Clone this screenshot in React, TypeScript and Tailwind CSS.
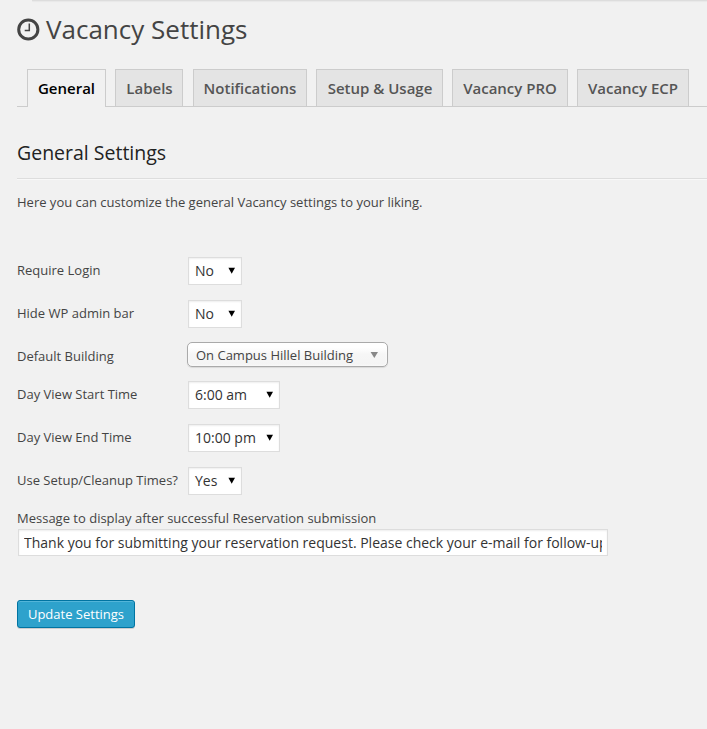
import React from "react";

const tabs = [
  { label: "Labels", cls: "ml-[9px] w-[68px] pl-px" },
  { label: "Notifications", cls: "ml-[10px] w-[114px]" },
  { label: "Setup & Usage", cls: "ml-[9px] w-[127px] pl-px" },
  { label: "Vacancy PRO", cls: "ml-[9px] w-[116px]" },
  { label: "Vacancy ECP", cls: "ml-[9px] w-[112px]" },
];

function Select({ value, width }: { value: string; width: string }) {
  return (
    <button
      className={`ml-px flex h-7 items-center justify-between border border-[#ddd] bg-white pr-[6px] pl-[6px] text-[14px] text-[#333] shadow-[inset_0_1px_2px_rgba(0,0,0,0.07)] ${width}`}
    >
      <span className="pb-[2px]">{value}</span>
      <svg className="mb-px" width="7" height="7" viewBox="0 0 7 7" fill="#000">
        <path d="M0.4 0.7h6.6L3.7 6.7z" />
      </svg>
    </button>
  );
}

function Row({ label, className, children }: { label: string; className: string; children: React.ReactNode }) {
  return (
    <div className={`flex items-center ${className}`}>
      <label className="w-[170px] pb-[2px] text-[13px] leading-5">{label}</label>
      {children}
    </div>
  );
}

export default function App() {
  return (
    <div className="h-[729px] w-[707px] overflow-hidden bg-[#f1f1f1] pl-[17px] font-['Open_Sans',sans-serif] whitespace-nowrap text-[#444]">
      <div className="ml-[15px] h-px bg-[#ddd] shadow-[0_1px_1px_rgba(0,0,0,0.04)]" />
      <h1 className="flex h-[58px] items-center text-[26px] leading-[36px] text-[#444]">
        <svg className="mr-[6px] mb-px" width="23" height="23" viewBox="0 0 23 23" fill="none" stroke="#444">
          <circle cx="11.3" cy="11.5" r="9.6" strokeWidth="3" />
          <path d="M12.3 5.5v7H7.7" strokeWidth="1.5" />
        </svg>
        <span className="pb-[2px]">Vacancy Settings</span>
      </h1>
      <nav className="mt-[10px] flex h-[38px] text-[15px] font-semibold text-[#555]">
        <div className="w-[10px] border-b border-[#ccc]" />
        <a className="flex w-[79px] items-center justify-center border border-b-0 border-[#ccc] bg-[#f1f1f1] text-black">
          General
        </a>
        <div className="flex flex-1 border-b border-[#ccc]">
          {tabs.map((t) => (
            <a
              key={t.label}
              className={`flex items-center justify-center border border-b-0 border-[#ccc] bg-[#e4e4e4] ${t.cls}`}
            >
              {t.label}
            </a>
          ))}
        </div>
      </nav>
      <h2 className="flex h-[72px] items-center border-b border-[#ddd] pt-[20px] text-[19.5px] text-[#222] shadow-[0_1px_0_#f8f8f8]">
        General Settings
      </h2>
      <p className="mt-[13px] text-[13px] leading-5">
        Here you can customize the general Vacancy settings to your liking.
      </p>
      <form className="mt-[45px]">
        <Row label="Require Login" className="h-7">
          <Select value="No" width="w-[54px]" />
        </Row>
        <Row label="Hide WP admin bar" className="mt-[15px] h-7">
          <Select value="No" width="w-[54px]" />
        </Row>
        <div className="mt-[14px] flex h-[26px] items-start">
          <label className="w-[170px] pt-[4px] text-[13px] leading-5">Default Building</label>
          <button className="flex h-[25px] w-[201px] items-center justify-between rounded-[5px] border border-[#aaa] bg-linear-to-b from-white from-20% via-[#f6f6f6] via-50% to-[#f4f4f4] pr-[9px] pl-2 text-[13px] text-[#444] shadow-[inset_0_0_3px_white,0_1px_1px_rgba(0,0,0,0.1)]">
            <span className="pt-[3px]">On Campus Hillel Building</span>
            <svg width="8" height="6" viewBox="0 0 8 6" fill="#888">
              <path d="M0.6 0h7.4L4.3 6z" />
            </svg>
          </button>
        </div>
        <Row label="Day View Start Time" className="mt-[13px] h-7">
          <Select value="6:00 am" width="w-[92px]" />
        </Row>
        <Row label="Day View End Time" className="mt-[15px] h-7">
          <Select value="10:00 pm" width="w-[92px]" />
        </Row>
        <Row label="Use Setup/Cleanup Times?" className="mt-[15px] h-7">
          <Select value="Yes" width="w-[54px]" />
        </Row>
        <div className="mt-[13px] text-[13px] leading-5">Message to display after successful Reservation submission</div>
        <div className="mt-px ml-px flex h-[27px] w-[590px] items-center border border-[#ddd] bg-white px-[5px] text-[14px] text-[#333] shadow-[inset_0_1px_2px_rgba(0,0,0,0.07)]">
          <span className="block w-full overflow-hidden">
            Thank you for submitting your reservation request. Please check your e-mail for follow-up
          </span>
        </div>
        <button className="mt-[44px] flex h-7 w-[118px] items-center justify-center rounded-[3px] border border-[#0074a2] bg-[#2ea2cc] pt-[2px] text-[13px] text-white shadow-[inset_0_1px_0_rgba(120,200,230,0.5),0_1px_0_rgba(0,0,0,0.15)]">
          Update Settings
        </button>
      </form>
    </div>
  );
}
